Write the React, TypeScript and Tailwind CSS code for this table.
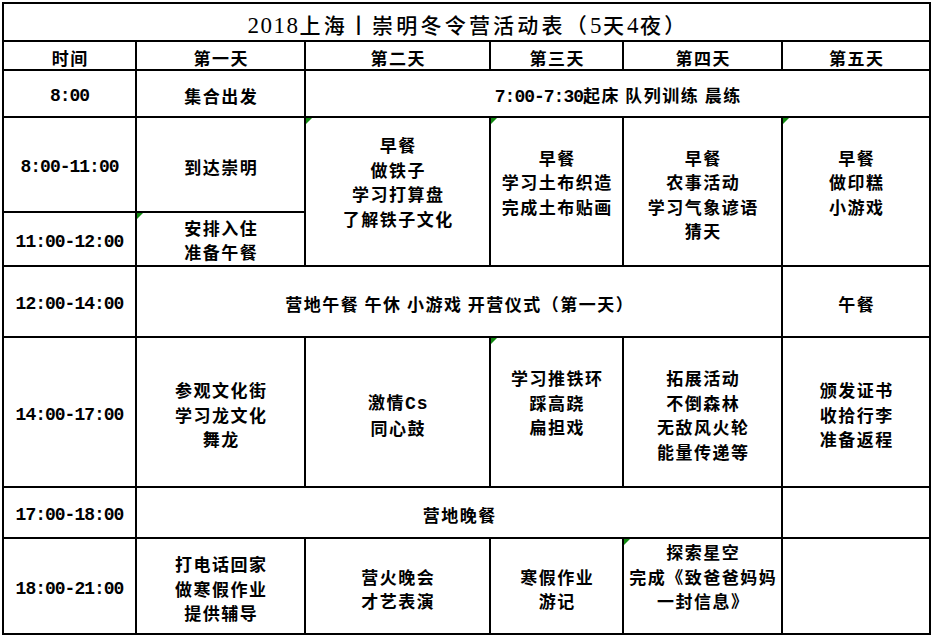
import React from "react";

const body =
  "font-['Noto_Sans_CJK_SC',sans-serif] text-[17px] font-bold leading-[24.5px] tracking-[1.5px] text-black";
const mono =
  "font-['Liberation_Mono','Noto_Sans_CJK_SC',monospace] text-[18px] font-bold leading-[24.5px] tracking-[-1px] text-black";

function Tri() {
  return (
    <span className="absolute left-0 top-0 h-0 w-0 border-t-[6px] border-r-[6px] border-t-[#118a11] border-r-transparent" />
  );
}

type CellProps = {
  lines?: React.ReactNode[];
  className?: string;
  pad?: string;
  tri?: boolean;
  time?: boolean;
};

function Cell({ lines = [], className = "", pad = "pt-[6px]", tri = false, time = false }: CellProps) {
  return (
    <div
      className={`relative flex flex-col items-center justify-center bg-white text-center ${pad} ${className}`}
    >
      {tri && <Tri />}
      {lines.map((l, i) => (
        <div key={i} className={`whitespace-nowrap ${time ? mono : body + " pl-[1.5px]"}`}>
          {l}
        </div>
      ))}
    </div>
  );
}

const M = ({ children }: { children: React.ReactNode }) => (
  <span className="font-['Liberation_Mono',monospace] text-[18px] tracking-[-1px]">{children}</span>
);

export default function App() {
  const trail = "pt-[6px] pb-[24.5px]";
  return (
    <div className="h-[637px] w-[933px] bg-white p-[2px]">
      <div className="grid grid-cols-[131px_167px_183px_131px_157px_146px] grid-rows-[36px_27px_45px_93px_52px_69px_148px_49px_94px] gap-[2px] bg-black p-[2px]">
        {/* title */}
        <div className="col-span-6 flex items-center justify-center bg-white pt-[7px]">
          <div className="whitespace-nowrap pl-[3px] font-['Liberation_Serif','Noto_Sans_CJK_SC',serif] text-[21px] font-medium leading-[26px] tracking-[3.2px] text-black">
            <span className="text-[23px] tracking-[1.5px]">2018</span>上海丨崇明冬令营活动表（
            <span className="text-[23px] tracking-[1.5px]">5</span>天
            <span className="text-[23px] tracking-[1.5px]">4</span>夜）
          </div>
        </div>

        {/* header */}
        <Cell lines={["时间"]} />
        <Cell lines={["第一天"]} />
        <Cell lines={["第二天"]} />
        <Cell lines={["第三天"]} />
        <Cell lines={["第四天"]} />
        <Cell lines={["第五天"]} />

        {/* 8:00 */}
        <Cell time lines={["8:00"]} />
        <Cell lines={["集合出发"]} />
        <Cell
          className="col-span-4"
          lines={[
            <>
              <M>7:00-7:30</M>起床 队列训练 晨练
            </>,
          ]}
        />

        {/* 8:00-11:00 */}
        <Cell time lines={["8:00-11:00"]} />
        <Cell lines={["到达崇明"]} />
        <Cell
          className="row-span-2"
          tri
          pad={trail}
          lines={["早餐", "做铁子", "学习打算盘", "了解铁子文化"]}
        />
        <Cell className="row-span-2" tri pad={trail} lines={["早餐", "学习土布织造", "完成土布贴画"]} />
        <Cell className="row-span-2" lines={["早餐", "农事活动", "学习气象谚语", "猜天"]} />
        <Cell className="row-span-2" tri pad={trail} lines={["早餐", "做印糕", "小游戏"]} />

        {/* 11:00-12:00 */}
        <Cell time lines={["11:00-12:00"]} />
        <Cell tri pad="pt-[2px]" lines={["安排入住", "准备午餐"]} />

        {/* 12:00-14:00 */}
        <Cell time lines={["12:00-14:00"]} />
        <Cell className="col-span-4" lines={["营地午餐 午休 小游戏 开营仪式（第一天）"]} />
        <Cell lines={["午餐"]} />

        {/* 14:00-17:00 */}
        <Cell time lines={["14:00-17:00"]} />
        <Cell lines={["参观文化街", "学习龙文化", "舞龙"]} />
        <Cell
          lines={[
            <>
              激情<span className="font-['Liberation_Mono',monospace] text-[18px] tracking-[1px]">Cs</span>
            </>,
            "同心鼓",
          ]}
        />
        <Cell tri pad={trail} lines={["学习推铁环", "踩高跷", "扁担戏"]} />
        <Cell lines={["拓展活动", "不倒森林", "无敌风火轮", "能量传递等"]} />
        <Cell lines={["颁发证书", "收拾行李", "准备返程"]} />

        {/* 17:00-18:00 */}
        <Cell time lines={["17:00-18:00"]} />
        <Cell className="col-span-4" lines={["营地晚餐"]} />
        <Cell />

        {/* 18:00-21:00 */}
        <Cell time lines={["18:00-21:00"]} />
        <Cell lines={["打电话回家", "做寒假作业", "提供辅导"]} />
        <Cell lines={["营火晚会", "才艺表演"]} />
        <Cell lines={["寒假作业", "游记"]} />
        <Cell tri pad={trail} lines={["探索星空", "完成《致爸爸妈妈", "一封信息》"]} />
        <Cell />
      </div>
    </div>
  );
}
